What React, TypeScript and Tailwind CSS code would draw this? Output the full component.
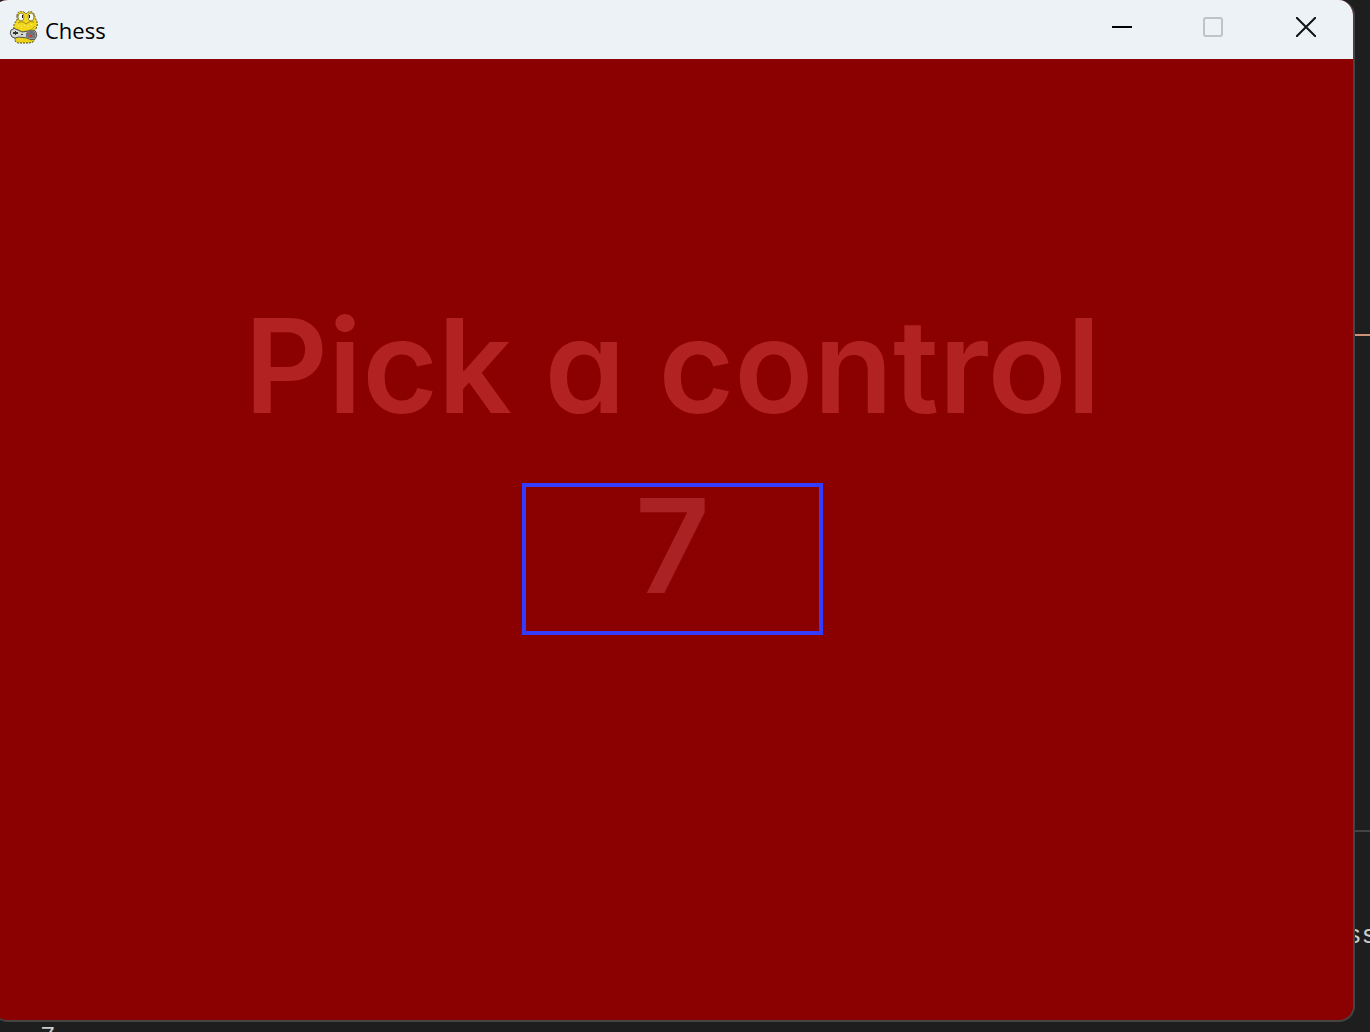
import React from "react";

function SnakeIcon() {
  return (
    <svg width="30" height="34" viewBox="0 0 30 34" aria-hidden="true" strokeLinejoin="round">
      <path d="M6 25 H23 L26 28 L24 31 L20 32 H9 L6 30 Z" fill="#ecd21a" stroke="#4c4820" strokeDasharray="2 1" />
      <path
        d="M8 5 Q8 1 12 0 Q16 1 17 3 Q19 0 23 1 Q26 3 26 7 Q29 11 28 15 Q27 19 24 21 L23 25 H8 L7 21 Q4 18 5 14 Q6 11 8 9 Z"
        fill="#f2d81c"
        stroke="#4c4820"
        strokeDasharray="2 1"
      />
      <path d="M9 12 Q13 9 17 13 Q21 9 25 11" fill="none" stroke="#a38e18" />
      <path d="M8 18 Q12 22 18 20 Q24 19 26 15" fill="none" stroke="#c2a914" />
      <ellipse cx="12" cy="6" rx="3" ry="4" fill="#f6f8f4" stroke="#958a3a" />
      <ellipse cx="22" cy="6" rx="3" ry="4" fill="#f6f8f4" stroke="#958a3a" />
      <path d="M13 4h1v3h-1z M20 4h1v3h-1z" fill="#1c1c1c" />
      <path d="M9 14h1v1h-1z M12 16h1v1h-1z M19 15h1v1h-1z M22 13h1v1h-1z M15 14h1v1h-1z" fill="#fff27a" />
      <path d="M2 19 Q5 16 9 19 L13 21 L20 20 Q25 18 27 21 Q29 25 26 28 Q22 30 18 27 L10 26 Q6 28 3 26 Q0 22 2 19Z" fill="#d5d9d6" stroke="#4e5150" />
      <path d="M17 22 Q20 19 25 20 Q28 23 26 27 Q22 29 17 26Z" fill="#77757a" />
      <path d="M4 21h5v2h-5z M6 20h1v4h-1z M12 23h2v1h-2z" fill="#343434" />
      <path d="M21 24h2v2h-2z M24 22h1v2h-1z M22 21h1v1h-1z" fill="#dc3530" />
    </svg>
  );
}

function TitleBar() {
  return (
    <header className="flex h-[59px] shrink-0 items-start bg-[#edf2f7] pl-[17px] text-black">
      <div className="flex h-14 items-center gap-[6px]">
        <SnakeIcon />
        <h1 className="pt-1 font-['Segoe_UI','Open_Sans',sans-serif] text-[22px] leading-8">Chess</h1>
      </div>
      <div className="ml-auto flex h-[54px]">
        <button type="button" aria-label="Minimize" className="flex w-[90px] items-center justify-center">
          <svg width="20" height="20" viewBox="0 0 20 20">
            <path d="M0 10H20" stroke="black" strokeWidth="2" />
          </svg>
        </button>
        <button type="button" aria-label="Maximize" disabled className="flex w-[92px] items-center justify-center">
          <svg width="20" height="20" viewBox="0 0 20 20">
            <rect x="1" y="1" width="18" height="18" rx="2" fill="none" stroke="#bfc3c7" strokeWidth="2" />
          </svg>
        </button>
        <button type="button" aria-label="Close" className="flex w-[94px] items-center justify-center">
          <svg width="20" height="20" viewBox="0 0 20 20">
            <path d="M0 0L20 20M20 0L0 20" stroke="#101318" strokeWidth="2" />
          </svg>
        </button>
      </div>
    </header>
  );
}

export default function App() {
  return (
    <div className="relative flex min-h-screen overflow-hidden bg-[#1e1e1e] pr-[15px] pb-[10px] font-['Liberation_Mono',monospace] text-[#cccccc]">
      <div className="absolute top-[334px] right-0 h-[2px] w-4 bg-[#ce9178]" />
      <div className="absolute top-[830px] right-0 h-[2px] w-4 bg-[#444444]" />
      <span className="absolute top-[918px] left-[1346px] text-[26px] leading-9">ss</span>
      <span className="absolute top-[1021px] left-10 text-[26px] leading-8">7</span>
      <main className="relative -ml-2 flex flex-1 flex-col overflow-hidden rounded-2xl border-r-2 border-b-2 border-[#444444] bg-[#8b0000]">
        <TitleBar />
        <section className="flex flex-1 flex-col items-center pt-[232px] font-['Comic_Sans_MS','Inter',sans-serif] text-[130px] leading-[150px] font-semibold text-[#b22222] [font-feature-settings:'cv11']">
          <label htmlFor="control" className="whitespace-nowrap">Pick a control</label>
          <input
            id="control"
            defaultValue="7"
            className="mt-[42px] h-[152px] w-[301px] border-4 border-[#333cff] bg-transparent pb-7 text-center text-[#aa2224] outline-none"
          />
        </section>
      </main>
    </div>
  );
}
